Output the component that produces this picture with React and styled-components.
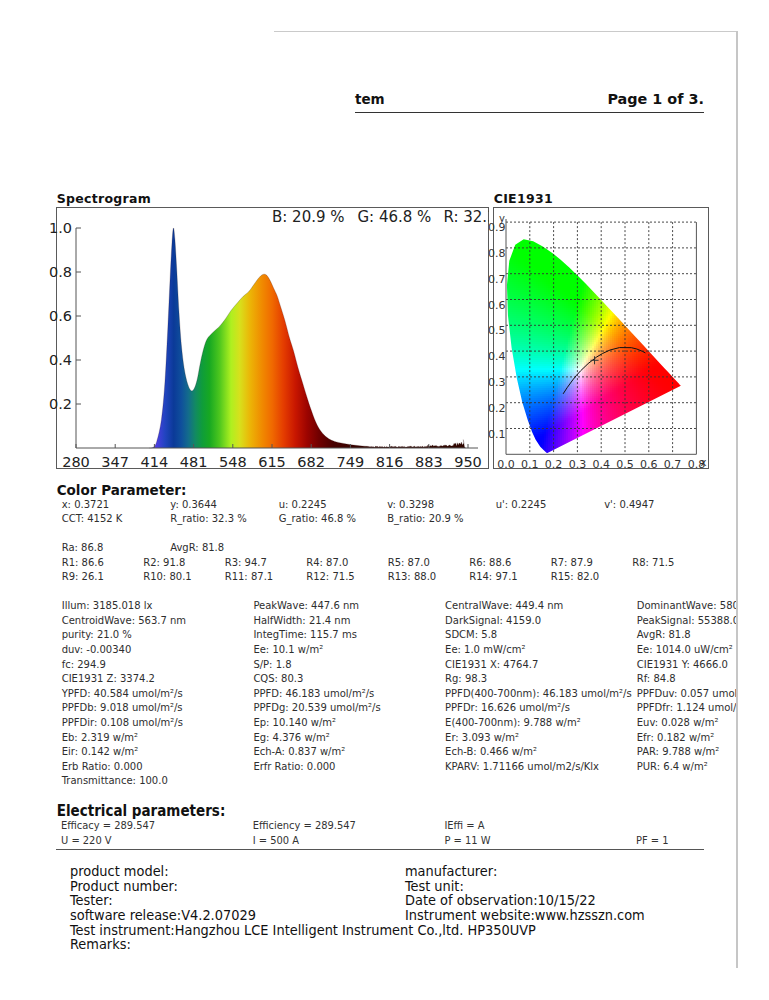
import React, { useMemo } from 'react';
import styled, { createGlobalStyle } from 'styled-components';

const GlobalStyle = createGlobalStyle`
  html, body { margin: 0; padding: 0; background: #fff; }
  body { font-family: "DejaVu Sans", Verdana, sans-serif; color: #222; }
`;

const COND = `"DejaVu Sans Condensed", "DejaVu Sans", sans-serif`;

const Page = styled.div`
  width: 769px;
  height: 1000px;
  padding-top: 31px;
  box-sizing: border-box;
  background: #fff;
  overflow: hidden;
`;

const Sheet = styled.div`
  margin-left: 40px;
  padding-left: 16px;
  width: 698px;
  height: 937px;
  box-sizing: border-box;
  border-right: 2px solid #c6c6c6;
  overflow: hidden;
  display: flex;
  flex-direction: column;
`;

const TopEdge = styled.div`
  margin-left: 218px;
  border-top: 1px solid #cacaca;
  height: 0;
`;

const Header = styled.div`
  margin-top: 59px;
  margin-left: 299px;
  width: 349px;
  display: flex;
  justify-content: space-between;
  font-weight: bold;
  font-size: 13.5px;
  line-height: 16px;
  padding-bottom: 4.5px;
  border-bottom: 1.3px solid #333;
  color: #111;
`;

const PageNo = styled.span`
  font-size: 14.4px;
`;

const Charts = styled.div`
  margin-top: 78.5px;
  display: flex;
  gap: 4px;
`;

const ChartCol = styled.div`
  display: flex;
  flex-direction: column;
`;

const ChartTitle = styled.div`
  font-weight: bold;
  font-size: 12.5px;
  letter-spacing: 0.3px;
  line-height: 15.5px;
  padding-left: 0.7px;
  color: #111;
`;

const ChartBox = styled.div`
  width: ${p => p.$w}px;
  height: 262px;
  box-sizing: border-box;
  border: 1px solid #5a5a5a;
  clip-path: ${p => (p.$clip ? 'inset(-4px 0 -4px -16px)' : 'none')};
  svg { display: block; overflow: visible; }
`;

const SectionTitle = styled.div`
  margin-top: ${p => p.$mt}px;
  font-weight: bold;
  font-size: ${p => p.$size}px;
  line-height: ${p => p.$lh}px;
  padding-left: 0.7px;
  color: #111;
  font-family: ${p => (p.$cond ? COND : '"DejaVu Sans", sans-serif')};
  font-stretch: ${p => (p.$cond ? 'condensed' : 'normal')};
`;

const Block = styled.div`
  margin-top: ${p => p.$mt || 0}px;
  padding-left: ${p => p.$indent}px;
  display: flex;
  flex-direction: column;
  font-size: 10px;
  line-height: ${p => p.$lh}px;
  color: #2e2e2e;
`;

const Row = styled.div`
  display: grid;
  grid-template-columns: repeat(${p => p.$cols}, ${p => p.$cw}px);
  white-space: nowrap;
  height: ${p => p.$lh}px;
`;

const Cell = styled.span`
  overflow: visible;
`;

const Elec = styled.div`
  width: 648px;
  box-sizing: border-box;
  padding-left: 5px;
  padding-bottom: 1.3px;
  border-bottom: 1.3px solid #555;
  display: flex;
  flex-direction: column;
  font-family: ${COND};
  font-stretch: condensed;
  font-size: 11px;
  line-height: 15px;
  color: #333;
`;

const Footer = styled.div`
  margin-top: 14px;
  padding-left: 14px;
  display: flex;
  flex-direction: column;
  font-family: ${COND};
  font-stretch: condensed;
  font-size: 14.4px;
  line-height: 14.6px;
  color: #111;
`;

const FootRow = styled.div`
  display: grid;
  grid-template-columns: ${p => (p.$wide ? '1fr' : '335px 1fr')};
  white-space: nowrap;
`;

/* ---------------- Spectrogram ---------------- */

const sx = nm => 76 + ((nm - 280) * 39.2) / 67;
const sy = v => 448 - v * 220;

const mainPts = [
  [405, 0], [412, 0.003], [418, 0.03], [426, 0.13], [432, 0.3], [437, 0.55], [441, 0.78],
  [444, 0.93], [446.5, 1.0], [449, 0.95], [452, 0.82], [456, 0.62], [460, 0.47], [465, 0.36],
  [471, 0.29], [477, 0.26], [482, 0.27], [487, 0.31], [492, 0.38], [497, 0.44], [503, 0.49],
  [510, 0.515], [518, 0.535], [526, 0.555], [535, 0.585], [545, 0.625], [556, 0.66], [566, 0.69],
  [575, 0.71], [582, 0.735], [590, 0.765], [596, 0.783], [601, 0.79], [606, 0.785], [612, 0.76],
  [618, 0.725], [624, 0.69], [630, 0.64], [637, 0.58], [645, 0.5], [652, 0.44], [660, 0.36],
  [668, 0.29], [676, 0.22], [685, 0.15], [693, 0.1], [702, 0.065], [712, 0.042], [722, 0.03],
  [735, 0.022], [750, 0.015], [765, 0.01], [780, 0.007],
];

function smoothPath(pts) {
  let d = `M${pts[0][0].toFixed(2)},${pts[0][1].toFixed(2)}`;
  for (let i = 0; i < pts.length - 1; i++) {
    const p0 = pts[i - 1] || pts[i];
    const p1 = pts[i];
    const p2 = pts[i + 1];
    const p3 = pts[i + 2] || p2;
    const c1x = p1[0] + (p2[0] - p0[0]) / 6;
    const c1y = p1[1] + (p2[1] - p0[1]) / 6;
    const c2x = p2[0] - (p3[0] - p1[0]) / 6;
    const c2y = p2[1] - (p3[1] - p1[1]) / 6;
    d += ` C${c1x.toFixed(2)},${c1y.toFixed(2)} ${c2x.toFixed(2)},${c2y.toFixed(2)} ${p2[0].toFixed(2)},${p2[1].toFixed(2)}`;
  }
  return d;
}

function rnd(n) {
  const s = Math.sin(n * 12.9898) * 43758.5453;
  return s - Math.floor(s);
}

const specStops = [
  [400, '#6a3ad8'], [418, '#4a3ee0'], [432, '#2244c0'], [447, '#0b3a98'], [460, '#0f4f9c'],
  [472, '#136c8c'], [484, '#128a62'], [496, '#0f9d3a'], [508, '#17a822'], [525, '#4cc61e'],
  [545, '#aef020'], [560, '#d8e01c'], [578, '#ecb406'], [598, '#f08a00'], [615, '#f06a00'],
  [635, '#e43c00'], [655, '#c81600'], [675, '#9c0400'], [695, '#700000'], [720, '#480000'],
  [760, '#360400'], [960, '#300800'],
];

function Spectrogram() {
  const { fillD, strokeD } = useMemo(() => {
    const pts = mainPts.map(([n, v]) => [sx(n), sy(v)]);
    let d = smoothPath(pts);
    for (let nm = 782; nm <= 944; nm += 1.4) {
      let v = 0.003 + rnd(nm) * 0.005;
      if (nm > 850) v += 0.004 * Math.abs(Math.sin(nm * 0.7)) * rnd(nm + 3);
      if (nm > 880) v += 0.01 * Math.abs(Math.sin(nm * 0.45)) * rnd(nm + 7);
      if (nm > 925 && nm < 944) v += 0.016 * Math.abs(Math.sin(nm * 1.3));
      d += ` L${sx(nm).toFixed(2)},${sy(v).toFixed(2)}`;
    }
    d += ` L${sx(942).toFixed(2)},${sy(0.038).toFixed(2)} L${sx(944).toFixed(2)},${sy(0.005).toFixed(2)} L${sx(946).toFixed(2)},${sy(0.0)}`;
    return { strokeD: d, fillD: `${d} L${sx(405)},448 Z` };
  }, []);

  const xLabels = [280, 347, 414, 481, 548, 615, 682, 749, 816, 883, 950];
  const yLabels = [1.0, 0.8, 0.6, 0.4, 0.2];
  const g0 = sx(400);
  const g1 = sx(960);

  return (
    <svg width="431" height="260" viewBox="57 208 431 260" fontFamily='"DejaVu Sans", sans-serif'>
      <defs>
        <linearGradient id="spec" gradientUnits="userSpaceOnUse" x1={g0} y1="0" x2={g1} y2="0">
          {specStops.map(([n, c]) => (
            <stop key={n} offset={((n - 400) / 560).toFixed(4)} stopColor={c} />
          ))}
        </linearGradient>
      </defs>
      <text x="272" y="221.5" fontSize="15" fill="#222">B: 20.9 %</text>
      <text x="357.5" y="221.5" fontSize="15" fill="#222">G: 46.8 %</text>
      <text x="443.5" y="221.5" fontSize="15" fill="#222">R: 32.3 %</text>

      <path d={fillD} fill="url(#spec)" />
      <path d={strokeD} fill="none" stroke="rgba(40,10,10,0.35)" strokeWidth="0.6" />

      <line x1="76" y1="228" x2="76" y2="448" stroke="#555" strokeWidth="1" />
      <line x1="76" y1="448" x2="478" y2="448" stroke="#555" strokeWidth="1" />
      {yLabels.map(v => (
        <g key={v}>
          <line x1="76" y1={sy(v)} x2="81" y2={sy(v)} stroke="#555" strokeWidth="1" />
          <text x="72" y={sy(v) + 5.3} fontSize="14.5" textAnchor="end" fill="#222">
            {v.toFixed(1)}
          </text>
        </g>
      ))}
      {xLabels.map(n => (
        <g key={n}>
          <line x1={sx(n)} y1="444" x2={sx(n)} y2="448" stroke="#555" strokeWidth="1" />
          <text x={sx(n)} y="466.5" fontSize="14.5" textAnchor="middle" fill="#222">
            {n}
          </text>
        </g>
      ))}
    </svg>
  );
}

/* ---------------- CIE 1931 ---------------- */

const cx = x => 506 + x * 238;
const cy = y => 454.3 - y * 258;

const locus = [
  [0.1741, 0.005], [0.1733, 0.0048], [0.1714, 0.0051], [0.1689, 0.0069], [0.1644, 0.0109],
  [0.1566, 0.0177], [0.144, 0.0297], [0.1241, 0.0578], [0.1096, 0.0868], [0.0913, 0.1327],
  [0.0687, 0.2007], [0.0454, 0.295], [0.0235, 0.4127], [0.0082, 0.5384], [0.0039, 0.6548],
  [0.0139, 0.7502], [0.0389, 0.812], [0.0743, 0.8338], [0.1142, 0.8262], [0.1547, 0.8059],
  [0.1929, 0.7816], [0.2296, 0.7543], [0.2658, 0.7243], [0.3016, 0.6923], [0.3373, 0.6589],
  [0.3731, 0.6245], [0.4087, 0.5896], [0.4441, 0.5547], [0.4788, 0.5202], [0.5125, 0.4866],
  [0.5448, 0.4544], [0.5752, 0.4242], [0.6029, 0.3965], [0.627, 0.3725], [0.6482, 0.3514],
  [0.6658, 0.334], [0.6801, 0.3197], [0.6915, 0.3083], [0.7006, 0.2993], [0.7079, 0.292],
  [0.714, 0.2859], [0.719, 0.2809], [0.723, 0.277], [0.726, 0.274], [0.73, 0.27], [0.7347, 0.2653],
];

const planck = [
  [0.2399, 0.2342], [0.2565, 0.2577], [0.2807, 0.2884], [0.295, 0.3048], [0.3135, 0.3237],
  [0.3451, 0.3516], [0.3805, 0.3768], [0.4053, 0.3907], [0.4369, 0.4041], [0.477, 0.4137],
  [0.5267, 0.4133], [0.5496, 0.4081], [0.5729, 0.3991], [0.5857, 0.3931],
];

function gam(c) {
  return c <= 0.0031308 ? 12.92 * c : 1.055 * Math.pow(c, 1 / 2.4) - 0.055;
}

function xyToRgb(x, y) {
  const X = x / y;
  const Z = (1 - x - y) / y;
  let r = 3.2406 * X - 1.5372 - 0.4986 * Z;
  let g = -0.9689 * X + 1.8758 + 0.0415 * Z;
  let b = 0.0557 * X - 0.204 + 1.057 * Z;
  r = Math.max(0, r);
  g = Math.max(0, g);
  b = Math.max(0, b);
  const m = Math.max(r, g, b) || 1;
  const k = 2;
  const f = c => Math.round(gam(Math.pow(c / m, k)) * 255);
  return `rgb(${f(r)},${f(g)},${f(b)})`;
}

function Cie() {
  const cells = useMemo(() => {
    const out = [];
    const step = 2;
    for (let py = 232; py < 455; py += step) {
      for (let px = 506; px < 684; px += step) {
        const x = (px + step / 2 - 506) / 238;
        const y = (454.3 - (py + step / 2)) / 258;
        if (y <= 0.002) continue;
        out.push(
          <rect key={`${px}-${py}`} x={px} y={py} width={step + 0.3} height={step + 0.3} fill={xyToRgb(x, Math.max(y, 0.004))} />
        );
      }
    }
    return out;
  }, []);

  const poly = locus.map(([x, y]) => `${cx(x).toFixed(2)},${cy(y).toFixed(2)}`).join(' ');
  const pl = planck.map(([x, y]) => `${cx(x).toFixed(2)},${cy(y).toFixed(2)}`).join(' ');
  const gx = [1, 2, 3, 4, 5, 6, 7];
  const gy = [1, 2, 3, 4, 5, 6, 7, 8, 9];
  const mx = cx(0.3721);
  const my = cy(0.3644);

  return (
    <svg width="214" height="260" viewBox="494 208 214 260" fontFamily='"DejaVu Sans", sans-serif'>
      <defs>
        <clipPath id="horse">
          <polygon points={poly} />
        </clipPath>
      </defs>
      <g clipPath="url(#horse)" shapeRendering="crispEdges">{cells}</g>

      {gx.map(i => (
        <line key={`vx${i}`} x1={cx(i / 10)} y1={cy(0.9)} x2={cx(i / 10)} y2={cy(0)} stroke="#333" strokeWidth="0.9" strokeDasharray="2 2" />
      ))}
      {gy.map(i => (
        <line key={`hy${i}`} x1={cx(0)} y1={cy(i / 10)} x2={cx(0.8)} y2={cy(i / 10)} stroke="#333" strokeWidth="0.9" strokeDasharray="2 2" />
      ))}
      <line x1={cx(0)} y1="219" x2={cx(0)} y2={cy(0)} stroke="#555" strokeWidth="1" />
      <line x1={cx(0)} y1={cy(0)} x2={cx(0.8)} y2={cy(0)} stroke="#555" strokeWidth="1" />
      <line x1={cx(0.8)} y1={cy(0.9)} x2={cx(0.8)} y2={cy(0)} stroke="#555" strokeWidth="1" />

      <polyline points={pl} fill="none" stroke="#111" strokeWidth="1" />
      <line x1={mx - 4} y1={my} x2={mx + 4} y2={my} stroke="#333" strokeWidth="1" />
      <line x1={mx} y1={my - 4} x2={mx} y2={my + 4} stroke="#333" strokeWidth="1" />

      {gy.map(i => (
        <text key={`ly${i}`} x="505.5" y={cy(i / 10) + 9} fontSize="11" textAnchor="end" fill="#333">
          {(i / 10).toFixed(1)}
        </text>
      ))}
      {[0, 1, 2, 3, 4, 5, 6, 7, 8].map(i => (
        <text key={`lx${i}`} x={cx(i / 10)} y="467.5" fontSize="11" textAnchor="middle" fill="#333">
          {(i / 10).toFixed(1)}
        </text>
      ))}
      <text x="502" y="221.5" fontSize="10" textAnchor="middle" fill="#333">y</text>
      <text x="703.5" y="466" fontSize="10" textAnchor="middle" fill="#333">x</text>
    </svg>
  );
}

/* ---------------- Data ---------------- */

const colorRows = [
  ['x: 0.3721', 'y: 0.3644', 'u: 0.2245', 'v: 0.3298', "u': 0.2245", "v': 0.4947"],
  ['CCT: 4152 K', 'R_ratio: 32.3 %', 'G_ratio: 46.8 %', 'B_ratio: 20.9 %', '', ''],
  null,
  ['Ra: 86.8', 'AvgR: 81.8', '', '', '', ''],
];

const rRows = [
  ['R1: 86.6', 'R2: 91.8', 'R3: 94.7', 'R4: 87.0', 'R5: 87.0', 'R6: 88.6', 'R7: 87.9', 'R8: 71.5'],
  ['R9: 26.1', 'R10: 80.1', 'R11: 87.1', 'R12: 71.5', 'R13: 88.0', 'R14: 97.1', 'R15: 82.0', ''],
];

const photoRows = [
  ['Illum: 3185.018 lx', 'PeakWave: 447.6 nm', 'CentralWave: 449.4 nm', 'DominantWave: 580.6 nm'],
  ['CentroidWave: 563.7 nm', 'HalfWidth: 21.4 nm', 'DarkSignal: 4159.0', 'PeakSignal: 55388.0'],
  ['purity: 21.0 %', 'IntegTime: 115.7 ms', 'SDCM: 5.8', 'AvgR: 81.8'],
  ['duv: -0.00340', 'Ee: 10.1 w/m²', 'Ee: 1.0 mW/cm²', 'Ee: 1014.0 uW/cm²'],
  ['fc: 294.9', 'S/P: 1.8', 'CIE1931 X: 4764.7', 'CIE1931 Y: 4666.0'],
  ['CIE1931 Z: 3374.2', 'CQS: 80.3', 'Rg: 98.3', 'Rf: 84.8'],
  ['YPFD: 40.584 umol/m²/s', 'PPFD: 46.183 umol/m²/s', 'PPFD(400-700nm): 46.183 umol/m²/s', 'PPFDuv: 0.057 umol/m²/s'],
  ['PPFDb: 9.018 umol/m²/s', 'PPFDg: 20.539 umol/m²/s', 'PPFDr: 16.626 umol/m²/s', 'PPFDfr: 1.124 umol/m²/s'],
  ['PPFDir: 0.108 umol/m²/s', 'Ep: 10.140 w/m²', 'E(400-700nm): 9.788 w/m²', 'Euv: 0.028 w/m²'],
  ['Eb: 2.319 w/m²', 'Eg: 4.376 w/m²', 'Er: 3.093 w/m²', 'Efr: 0.182 w/m²'],
  ['Eir: 0.142 w/m²', 'Ech-A: 0.837 w/m²', 'Ech-B: 0.466 w/m²', 'PAR: 9.788 w/m²'],
  ['Erb Ratio: 0.000', 'Erfr Ratio: 0.000', 'KPARV: 1.71166 umol/m2/s/Klx', 'PUR: 6.4 w/m²'],
  ['Transmittance: 100.0', '', '', ''],
];

const elecRows = [
  ['Efficacy = 289.547', 'Efficiency = 289.547', 'IEffi = A', ''],
  ['U = 220 V', 'I = 500 A', 'P = 11 W', 'PF = 1'],
];

const footRows = [
  ['product model:', 'manufacturer:'],
  ['Product number:', 'Test unit:'],
  ['Tester:', 'Date of observation:10/15/22'],
  ['software release:V4.2.07029', 'Instrument website:www.hzsszn.com'],
  ['Test instrument:Hangzhou LCE Intelligent Instrument Co.,ltd. HP350UVP'],
  ['Remarks:'],
];

function ParamRows({ rows, cols, cw, lh }) {
  return rows.map((r, i) =>
    r === null ? (
      <Row key={i} $cols={1} $cw={cw} $lh={lh} />
    ) : (
      <Row key={i} $cols={cols} $cw={cw} $lh={lh}>
        {r.map((c, j) => (
          <Cell key={j}>{c}</Cell>
        ))}
      </Row>
    )
  );
}

export default function App() {
  return (
    <>
      <GlobalStyle />
      <Page>
        <Sheet>
          <TopEdge />
          <Header>
            <span>tem</span>
            <PageNo>Page 1 of 3.</PageNo>
          </Header>

          <Charts>
            <ChartCol>
              <ChartTitle>Spectrogram</ChartTitle>
              <ChartBox $w={433} $clip>
                <Spectrogram />
              </ChartBox>
            </ChartCol>
            <ChartCol>
              <ChartTitle>CIE1931</ChartTitle>
              <ChartBox $w={216}>
                <Cie />
              </ChartBox>
            </ChartCol>
          </Charts>

          <SectionTitle $mt={14} $size={13.5} $lh={15}>Color Parameter:</SectionTitle>
          <Block $indent={5.7} $lh={14.5}>
            <ParamRows rows={colorRows} cols={6} cw={108.5} lh={14.5} />
            <ParamRows rows={rRows} cols={8} cw={81.5} lh={14.5} />
          </Block>

          <Block $indent={5.7} $lh={14.6} $mt={14.7}>
            <ParamRows rows={photoRows} cols={4} cw={191.7} lh={14.6} />
          </Block>

          <SectionTitle $mt={15} $size={15} $lh={14} $cond>Electrical parameters:</SectionTitle>
          <Elec>
            <ParamRows rows={elecRows} cols={4} cw={191.7} lh={15} />
          </Elec>

          <Footer>
            {footRows.map((r, i) => (
              <FootRow key={i} $wide={r.length === 1}>
                {r.map((c, j) => (
                  <span key={j}>{c}</span>
                ))}
              </FootRow>
            ))}
          </Footer>
        </Sheet>
      </Page>
    </>
  );
}
